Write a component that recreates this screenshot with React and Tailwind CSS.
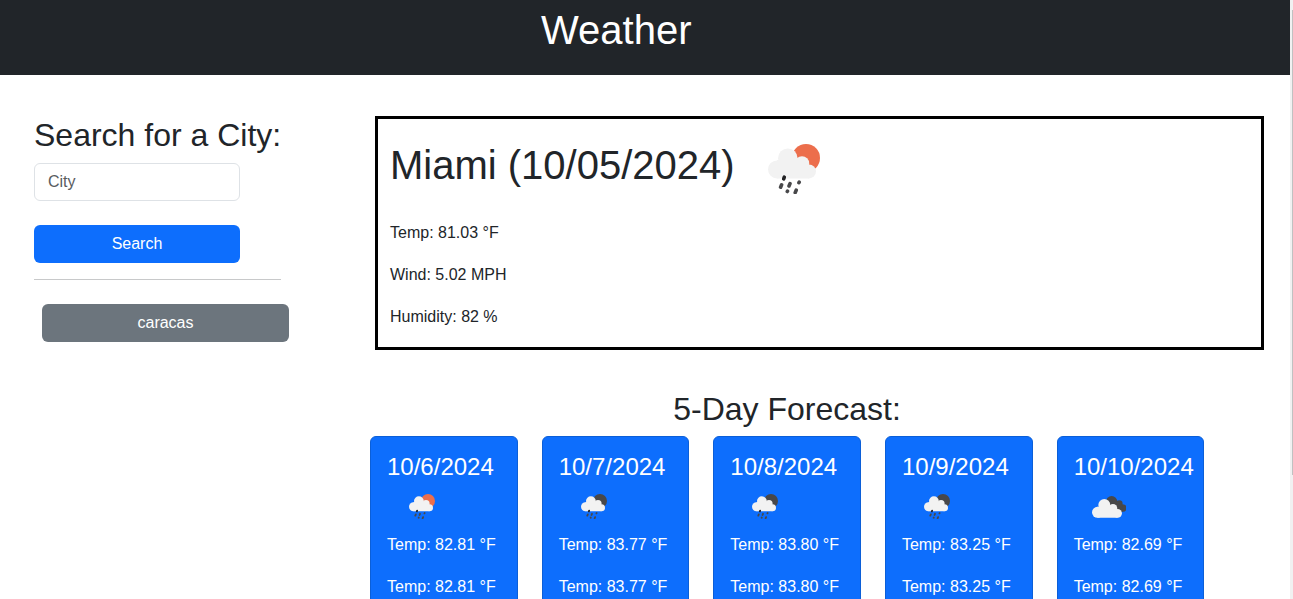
function Drops() {
  return (
    <g stroke="#48484a" strokeWidth="3.6" strokeLinecap="round">
      <path d="M34.3 47.2l-.6 1.6" stroke="#222224" />
      <path d="M31.6 54.8l-1 2.4M40 53.6l-1 2.4M49.2 52.1l-.3.6M37.5 61.1l-.2.4M46.2 60.2l-1 2.4" />
    </g>
  );
}

function RainIcon({ orb, className }) {
  return (
    <svg viewBox="18 14 52 50" className={className}>
      <circle cx="56" cy="28" r="14" fill={orb} />
      <g fill="#f2f2f2">
        <circle cx="27" cy="39.4" r="9" />
        <circle cx="37.8" cy="28.2" r="9.8" />
        <circle cx="52" cy="33.4" r="7.2" />
        <circle cx="59" cy="41.4" r="7" />
        <path d="M27 30h18l14 10v8.4H27z" />
      </g>
      <Drops />
    </svg>
  );
}

function CloudsIcon({ className }) {
  return (
    <svg viewBox="126 199 104 66" className={className}>
      <g fill="#48484a">
        <circle cx="185" cy="216" r="17" />
        <circle cx="208" cy="222" r="10" />
        <circle cx="218" cy="235" r="11.5" />
        <path d="M185 216h23l10 12v18h-33z" />
      </g>
      <g fill="#f2f2f2">
        <circle cx="142.5" cy="248" r="16.5" />
        <circle cx="163" cy="226" r="18" />
        <circle cx="189" cy="236" r="13" />
        <circle cx="203" cy="251" r="13" />
        <path d="M142 231h37l24 18v15.5h-61z" />
      </g>
    </svg>
  );
}

const days = [
  { date: "10/6/2024", temp: "82.81", icon: "day" },
  { date: "10/7/2024", temp: "83.77", icon: "night" },
  { date: "10/8/2024", temp: "83.80", icon: "night" },
  { date: "10/9/2024", temp: "83.25", icon: "night" },
  { date: "10/10/2024", temp: "82.69", icon: "clouds" },
];

function DayIcon({ kind }) {
  if (kind === "clouds") return <CloudsIcon className="ml-[18px] mt-[15px] h-[22px] w-[34.6px]" />;
  return (
    <RainIcon
      orb={kind === "day" ? "#ec6e4c" : "#48484a"}
      className="ml-[22px] mt-[13px] h-[25px] w-[26px]"
    />
  );
}

function DayCard({ day }) {
  return (
    <div className="h-[260px] w-[147.67px] shrink-0 rounded-md border border-[#0b5fd8] bg-[#0d6efd] pl-4 pt-[15px] text-white">
      <h5 className="whitespace-nowrap text-[24px] leading-[29px]">{day.date}</h5>
      <div className="flex h-[52px] items-start">
        <DayIcon kind={day.icon} />
      </div>
      <p className="mb-[18px] leading-6">Temp: {day.temp} °F</p>
      <p className="mb-[18px] leading-6">Temp: {day.temp} °F</p>
    </div>
  );
}

export default function App() {
  return (
    <div className="flex h-[599px] w-full overflow-hidden bg-white font-['Liberation_Sans',Arial,sans-serif] text-base text-[#212529]">
      <div className="flex w-[1290px] shrink-0 flex-col">
        <header className="h-[75px] shrink-0 bg-[#212529] pl-[541px] pt-[6px]">
          <h1 className="text-[40px] leading-[48px] text-white">Weather</h1>
        </header>
        <div className="flex">
          <aside className="w-[370px] shrink-0 pl-[34px] pt-[41px]">
            <h2 className="text-[32px] leading-[38px]">Search for a City:</h2>
            <input
              placeholder="City"
              className="mt-[9px] block h-[38px] w-[206px] rounded-md border border-[#dee2e6] px-[13px] placeholder:text-[#595c5f]"
            />
            <button className="mt-6 block h-[38px] w-[206px] rounded-md bg-[#0d6efd] text-white">
              Search
            </button>
            <hr className="mt-4 w-[247px] border-t border-[#c8c9ca]" />
            <button className="ml-2 mt-6 block h-[38px] w-[247px] rounded-md bg-[#6c757d] text-white">
              caracas
            </button>
          </aside>
          <main className="flex-1 pt-[41px]">
            <section className="ml-[5px] h-[234px] w-[889px] border-[3px] border-black pl-3 pt-[22px]">
              <div className="flex items-start">
                <h1 className="w-[378px] whitespace-nowrap text-[40px] leading-[48px]">Miami (10/05/2024)</h1>
                <RainIcon orb="#ec6e4c" className="mt-[3px] h-[50px] w-[52px]" />
              </div>
              <p className="mt-[27px] leading-6">Temp: 81.03 °F</p>
              <p className="mt-[18px] leading-6">Wind: 5.02 MPH</p>
              <p className="mt-[18px] leading-6">Humidity: 82 %</p>
            </section>
            <h2 className="mt-10 w-[834px] text-center text-[32px] leading-[38px]">5-Day Forecast:</h2>
            <div className="mt-2 flex gap-6">
              {days.map((day) => (
                <DayCard key={day.date} day={day} />
              ))}
            </div>
          </main>
        </div>
      </div>
      <div className="flex flex-1 justify-end bg-[#f1f1f1] pt-[10px]">
        <div className="h-[465px] w-px bg-[#c1c1c1]" />
      </div>
    </div>
  );
}
